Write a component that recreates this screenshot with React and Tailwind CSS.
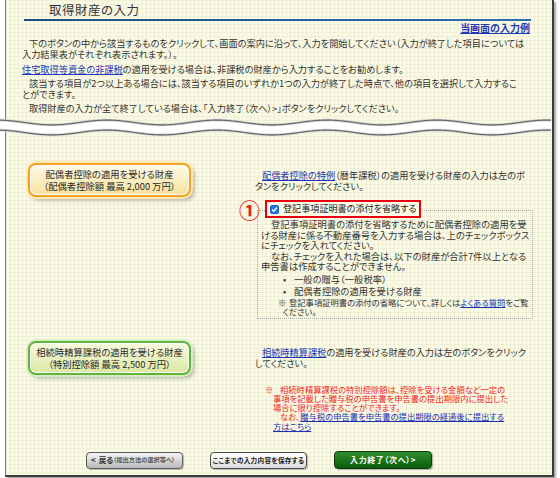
const WAVE_W = 551;

function wavePoints(cy) {
  const pts = [];
  for (let x = 0; x <= WAVE_W; x += 1) {
    const y = cy - 2.4 * Math.cos((2 * Math.PI * (x - 437)) / 110);
    pts.push([x, y]);
  }
  return pts;
}

function toPath(pts) {
  return pts.map(([x, y], i) => `${i ? "L" : "M"}${x} ${y.toFixed(2)}`).join(" ");
}

function WaveBreak() {
  const top = wavePoints(6.5);
  const bottom = wavePoints(16.5);
  const band =
    toPath(top) +
    " " +
    bottom
      .slice()
      .reverse()
      .map(([x, y]) => `L${x} ${y.toFixed(2)}`)
      .join(" ") +
    " Z";
  return (
    <svg width={WAVE_W} height="22" viewBox={`0 0 ${WAVE_W} 22`} className="block shrink-0 -ml-[6px]">
      <path d={band} fill="#ffffff" />
      <path d={toPath(top)} fill="none" stroke="#cfcfcf" strokeWidth="2.6" />
      <path d={toPath(top)} fill="none" stroke="#666" strokeWidth="1.1" />
      <path d={toPath(bottom)} fill="none" stroke="#cfcfcf" strokeWidth="2.6" />
      <path d={toPath(bottom)} fill="none" stroke="#666" strokeWidth="1.1" />
    </svg>
  );
}

function BigButton({ tone, lines }) {
  const look =
    tone === "orange"
      ? "border-[#f0a228] bg-[linear-gradient(#fffbe8,#f6e29c)] shadow-[0_0_0_2px_#fde9b0,3px_3px_4px_rgba(0,0,0,0.3),inset_0_0_0_1px_#fff]"
      : "border-[#5fb43a] bg-[linear-gradient(#f7fadf,#dce8a4)] shadow-[0_0_0_2px_#d8eec2,3px_3px_4px_rgba(0,0,0,0.3),inset_0_0_0_1px_#fff]";
  return (
    <button
      className={`w-[163px] h-[34px] rounded-[8px] border-2 ${look} flex flex-col items-center justify-center text-[9.3px] leading-[12px] text-[#2a2a2a] whitespace-nowrap`}
    >
      <span>{lines[0]}</span>
      <span>{lines[1]}</span>
    </button>
  );
}

function CheckBox() {
  return (
    <span className="w-[9px] h-[9px] rounded-[2px] bg-[#1f74e6] border border-[#1a5fc0] flex items-center justify-center shrink-0">
      <svg width="7" height="7" viewBox="0 0 7 7">
        <path d="M1 3.6 L2.8 5.3 L6 1.5" fill="none" stroke="#fff" strokeWidth="1.4" />
      </svg>
    </span>
  );
}

const link = "text-[#1f35b5] underline underline-offset-[1px]";

export default function App() {
  return (
    <div className="w-[560px] h-[478px] overflow-hidden bg-white text-[#333] font-['Noto_Sans_CJK_JP',sans-serif] [font-feature-settings:'palt']">
      <div className="ml-[5px] w-[549px] h-[477px] flex flex-col border-l border-l-[#7a7a7a] border-r-2 border-r-[#3c3c3c] border-b-2 border-b-[#3c3c3c] shadow-[2px_2px_2px_rgba(0,0,0,0.35)] bg-[#fbfbe8] bg-[linear-gradient(to_right,#f0f0d8_1px,transparent_1px),linear-gradient(to_bottom,#f0f0d8_1px,transparent_1px)] bg-size-[4px_4px]">
        {/* header + intro */}
        <div className="shrink-0 h-[116px]">
          <h1 className="pl-[43px] pt-[3px] text-[12.5px] leading-[14px] tracking-[0.5px] font-normal">取得財産の入力</h1>
          <div className="ml-[18px] mt-[2px] w-[507px] h-[2px] bg-[linear-gradient(to_right,#1d4f86,#2c6fb0)]" />
          <div className="mt-[1px] pr-[22px] text-right text-[10px] leading-[11px] font-bold">
            <a className="text-[#1f3bb8] underline underline-offset-[1px]">当画面の入力例</a>
          </div>
          <div className="mt-[5px] pl-[16px] text-[9.2px] leading-[11px] whitespace-nowrap">
            <p className="indent-[7px]">
              下のボタンの中から該当するものをクリックして、画面の案内に沿って、入力を開始してください（入力が終了した項目については
              <br />
              入力結果表がそれぞれ表示されます。）。
            </p>
            <p className="mt-[4px]">
              <a className={link}>住宅取得等資金の非課税</a>の適用を受ける場合は、非課税の財産から入力することをお勧めします。
            </p>
            <p className="mt-[3px] indent-[7px]">
              該当する項目が2つ以上ある場合には、該当する項目のいずれか1つの入力が終了した時点で、他の項目を選択して入力するこ
              <br />
              とができます。
            </p>
            <p className="mt-[3px] indent-[7px]">
              取得財産の入力が全て終了している場合は、「入力終了（次へ）&gt;」ボタンをクリックしてください。
            </p>
          </div>
        </div>

        <WaveBreak />

        <div className="flex-1 flex flex-col">
          {/* spouse deduction */}
          <div className="flex items-start">
            <div className="ml-[22px] mt-[25px] w-[163px]">
              <BigButton tone="orange" lines={["配偶者控除の適用を受ける財産", "（配偶者控除額 最高 2,000 万円）"]} />
            </div>
            <div className="ml-[64px] mt-[32px] w-[278px]">
              <p className="text-[9.2px] leading-[11px] whitespace-nowrap indent-[7px]">
                <a className={link}>配偶者控除の特例</a>（暦年課税）の適用を受ける財産の入力は左のボ
                <br />
                タンをクリックしてください。
              </p>
              <div className="relative z-10 mt-[8px] -ml-[16px] h-[18px] flex items-center">
                <span className="w-[21px] text-[21px] leading-none font-bold text-[#e5231b]">①</span>
                <div className="ml-[5px] h-[18px] w-[156px] border-2 border-[#e60012] bg-[#fbfbe8] flex items-center gap-[4px] pl-[3px]">
                  <CheckBox />
                  <span className="text-[9.1px] leading-none whitespace-nowrap text-[#222]">登記事項証明書の添付を省略する</span>
                </div>
              </div>
              <div className="-mt-[8px] ml-[2px] w-[276px] border border-dotted border-[#a8a8a8] pt-[8px] pb-[2px] pl-[3px] text-[9.3px] leading-[10.5px] whitespace-nowrap">
                <p className="indent-[10px]">
                  登記事項証明書の添付を省略するために配偶者控除の適用を受
                  <br />
                  ける財産に係る不動産番号を入力する場合は、上のチェックボックス
                  <br />
                  にチェックを入れてください。
                </p>
                <p className="indent-[10px]">
                  なお、チェックを入れた場合は、以下の財産が合計7件以上となる
                  <br />
                  申告書は作成することができません。
                </p>
                <ul className="pl-[22px] pt-[1px] leading-[12.5px]">
                  <li className="flex">
                    <span className="w-[11px]">•</span>一般の贈与（一般税率）
                  </li>
                  <li className="flex">
                    <span className="w-[11px]">•</span>配偶者控除の適用を受ける財産
                  </li>
                </ul>
                <div className="pl-[17px] text-[8.3px] leading-[9px]">
                  <p>
                    <span className="inline-block w-[11px]">※</span>登記事項証明書の添付の省略について、詳しくは
                    <a className={link}>よくある質問</a>をご覧
                  </p>
                  <p className="pl-[5px]">ください。</p>
                </div>
              </div>
            </div>
          </div>

          {/* settlement taxation */}
          <div className="flex items-start">
            <div className="ml-[22px] mt-[22px] w-[163px]">
              <BigButton tone="green" lines={["相続時精算課税の適用を受ける財産", "（特別控除額 最高 2,500 万円）"]} />
            </div>
            <div className="ml-[64px] mt-[28px] w-[278px]">
              <p className="text-[9.2px] leading-[11px] whitespace-nowrap indent-[7px]">
                <a className={link}>相続時精算課税</a>の適用を受ける財産の入力は左のボタンをクリック
                <br />
                してください。
              </p>
              <div className="mt-[16px] ml-[10px] flex text-[8.3px] leading-[9.3px] text-[#f01e1e] whitespace-nowrap">
                <span className="w-[8px] shrink-0">※</span>
                <div>
                  <p className="indent-[7px]">
                    相続時精算課税の特別控除額は、控除を受ける金額など一定の
                    <br />
                    事項を記載した贈与税の申告書を申告書の提出期限内に提出した
                    <br />
                    場合に限り控除することができます。
                  </p>
                  <p className="indent-[7px]">
                    なお、
                    <a className="text-[#2030b0] underline underline-offset-[1px]">
                      贈与税の申告書を申告書の提出期限の経過後に提出する
                      <br />
                      方はこちら
                    </a>
                  </p>
                </div>
              </div>
            </div>
          </div>

          {/* navigation */}
          <div className="mt-auto mb-[6px] pl-[80px] flex items-center gap-[27px]">
            <button className="w-[97px] h-[17px] rounded-[4px] border border-[#5a5a5a] bg-[linear-gradient(#f4f4f4,#b9b9b9)] shadow-[1px_1px_1px_rgba(0,0,0,0.25)] flex items-center pl-[4px] text-[#333] whitespace-nowrap">
              <span className="text-[8px] font-bold leading-none">&lt;</span>
              <span className="ml-[3px] text-[7.6px] font-bold leading-none">戻る</span>
              <span className="text-[6.2px] font-bold leading-none text-[#555]">（提出方法の選択等へ）</span>
            </button>
            <button className="w-[97px] h-[17px] rounded-[4px] border border-[#4a4a4a] bg-[linear-gradient(#ffffff,#dcdcdc)] shadow-[1px_1px_1px_rgba(0,0,0,0.25)] flex items-center justify-center text-[6.6px] font-bold leading-none tracking-[0.3px] text-[#222] whitespace-nowrap">
              ここまでの入力内容を保存する
            </button>
            <button className="w-[98px] h-[18px] rounded-[4px] border border-[#0b3d0b] bg-[linear-gradient(#2f8f2f,#0a5c0a)] shadow-[1px_1px_1px_rgba(0,0,0,0.3)] flex items-center justify-center text-[8px] font-bold leading-none tracking-[0.6px] text-white whitespace-nowrap">
              入力終了（次へ）&gt;
            </button>
          </div>
        </div>
      </div>
    </div>
  );
}
